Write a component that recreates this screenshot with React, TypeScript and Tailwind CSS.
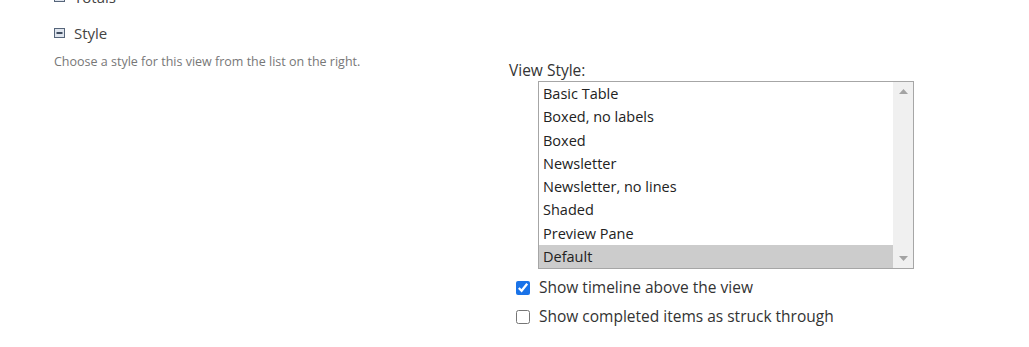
import React, { useState } from "react";

const styles = [
  "Basic Table",
  "Boxed, no labels",
  "Boxed",
  "Newsletter",
  "Newsletter, no lines",
  "Shaded",
  "Preview Pane",
  "Default",
];

const ToggleIcon: React.FC = () => (
  <svg width="11" height="10" viewBox="0 0 11 10" className="shrink-0">
    <rect x="0" y="0" width="11" height="10" fill="#56657a" />
    <rect x="1" y="1" width="9" height="8" fill="#dfe5ee" />
    <rect x="2.5" y="4" width="6" height="2" fill="#3f4c60" />
  </svg>
);

const App: React.FC = () => {
  const [selected, setSelected] = useState<string>("Default");
  const [timeline, setTimeline] = useState<boolean>(true);
  const [struck, setStruck] = useState<boolean>(false);

  return (
    <div className="w-[1029px] h-[347px] overflow-hidden bg-white font-['Open_Sans',sans-serif]">
      <div className="pl-[54px] -mt-[13px]">
        <div className="flex items-center gap-[9px] h-[20px] text-[15px] text-[#444]">
          <ToggleIcon />
          <span>Totals</span>
        </div>
        <div className="flex items-center gap-[9px] h-[20px] mt-[16px] text-[15px] text-[#444]">
          <ToggleIcon />
          <span>Style</span>
        </div>
      </div>

      <div className="flex mt-[11px]">
        <div className="w-[509px] pl-[54px]">
          <p className="text-[12.5px] text-[#777] leading-[16px]">
            Choose a style for this view from the list on the right.
          </p>
        </div>

        <div className="pt-[6px]">
          <div className="text-[15.5px] text-[#333] leading-[20px]">View Style:</div>
          <div className="ml-[29px] mt-[1px] w-[376px] h-[188px] border border-[#a6a6a6] flex">
            <div className="flex-1 flex flex-col">
              {styles.map((s) => (
                <div
                  key={s}
                  onClick={() => setSelected(s)}
                  className={`h-[23.25px] leading-[23px] pl-[4px] text-[14.5px] text-[#222] cursor-default ${
                    selected === s ? "bg-[#cccccc]" : ""
                  }`}
                >
                  {s}
                </div>
              ))}
            </div>
            <div className="w-[20px] bg-[#f0f0f0] flex flex-col justify-between items-center py-[7px]">
              <svg width="9" height="5" viewBox="0 0 9 5">
                <path d="M0 5 L4.5 0 L9 5 Z" fill="#a3a3a3" />
              </svg>
              <svg width="9" height="5" viewBox="0 0 9 5">
                <path d="M0 0 L4.5 5 L9 0 Z" fill="#a3a3a3" />
              </svg>
            </div>
          </div>

          <label className="flex items-center gap-[9px] ml-[7px] mt-[10px] h-[18px] text-[15.5px] text-[#333]">
            <input
              type="checkbox"
              checked={timeline}
              onChange={(e) => setTimeline(e.target.checked)}
              className="w-[14px] h-[14px] m-0 accent-[#1a73e8]"
            />
            Show timeline above the view
          </label>
          <label className="flex items-center gap-[9px] ml-[7px] mt-[11px] h-[18px] text-[15.5px] text-[#333]">
            <input
              type="checkbox"
              checked={struck}
              onChange={(e) => setStruck(e.target.checked)}
              className="w-[14px] h-[14px] m-0"
            />
            Show completed items as struck through
          </label>
        </div>
      </div>
    </div>
  );
};

export default App;
